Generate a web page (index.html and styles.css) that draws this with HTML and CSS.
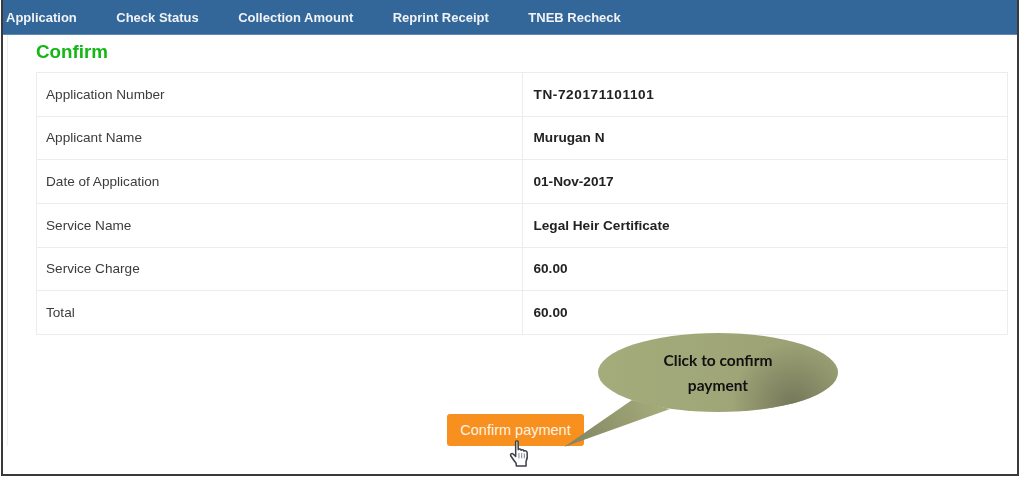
FILE: index.html
```html
<!DOCTYPE html>
<html lang="en">
<head>
    <meta charset="UTF-8">
    <meta name="viewport" content="width=device-width, initial-scale=1.0">
    <title>Confirm</title>
    <link rel="stylesheet" href="styles.css">
</head>
<body>
    <div class="frame">
        <div class="menu">
            <a href="#">Application</a>
            <a href="#">Check Status</a>
            <a href="#">Collection Amount</a>
            <a href="#">Reprint Receipt</a>
            <a href="#">TNEB Recheck</a>
        </div>
        <div class="content">
            <h1>Confirm</h1>
            <table class="details">
                <tr><td>Application Number</td><td class="value app-no">TN-720171101101</td></tr>
                <tr><td>Applicant Name</td><td class="value">Murugan N</td></tr>
                <tr><td>Date of Application</td><td class="value">01-Nov-2017</td></tr>
                <tr><td>Service Name</td><td class="value">Legal Heir Certificate</td></tr>
                <tr><td>Service Charge</td><td class="value">60.00</td></tr>
                <tr><td>Total</td><td class="value">60.00</td></tr>
            </table>
            <div class="actions">
                <button class="confirm-btn">Confirm payment</button>
                <!-- callout over the button -->
                <svg class="callout-shape" width="290" height="130" viewBox="0 0 290 130">
                    <defs>
                        <linearGradient id="olive" gradientUnits="userSpaceOnUse" x1="45" y1="40" x2="285" y2="40">
                            <stop offset="0" stop-color="#a5ac7b"/>
                            <stop offset="1" stop-color="#9aa074"/>
                        </linearGradient>
                        <linearGradient id="tail" gradientUnits="userSpaceOnUse" x1="100" y1="70" x2="11" y2="115">
                            <stop offset="0" stop-color="#a3a979"/>
                            <stop offset="1" stop-color="#7f8361"/>
                        </linearGradient>
                        <radialGradient id="shade" gradientUnits="userSpaceOnUse" cx="240" cy="72" r="62">
                            <stop offset="0" stop-color="#75785a"/>
                            <stop offset="1" stop-color="#75785a" stop-opacity="0"/>
                        </radialGradient>
                    </defs>
                    <path d="M11 115 L79 68 L117 77 Z" fill="url(#tail)"/>
                    <ellipse cx="165" cy="40.500" rx="120" ry="39.500" fill="url(#olive)"/>
                    <ellipse cx="165" cy="40.500" rx="120" ry="39.500" fill="url(#shade)"/>
                </svg>
                <div class="callout-text">Click to confirm<br>payment</div>
                <svg class="hand" width="22" height="27" viewBox="0 0 20 25">
                    <path d="M6 1.500 C6 .6 8.200 .6 8.200 1.500 L8.400 9 C9 8 10.800 8.200 11 9.400 C11.800 8.600 13.400 9 13.600 10.200 C14.600 9.600 16.400 10 16.600 11.600 C17 14.500 17 17 15.600 20 L15.600 24 L6.600 24 L6.400 21.600 C4.600 19.400 3 17 1.400 14.600 C.6 13.200 2.400 12 3.600 13 L6 15.200 Z" fill="#fff" stroke="#3a3f48" stroke-width="1.400" stroke-linejoin="round"/>
                    <path d="M9 12 V17 M11.600 12 V17 M14 12.500 V17" stroke="#6b7078" stroke-width="0.8" fill="none"/>
                </svg>
            </div>
        </div>
    </div>
</body>
</html>
```

FILE: styles.css
```css
body {
    margin: 0;
    padding: 0;
    background: #fff;
    font-family: "Liberation Sans", Arial, sans-serif;
    font-size: 12px;
    color: #333;
}
.frame {
    width: 1018px;
    height: 476px;
    margin-left: 1px;
    box-sizing: border-box;
    border: 2px solid #3a3a3a;
    border-top: none;
    overflow: hidden;
    filter: blur(0.4px); /* reference is a soft upscaled capture */
}
.menu {
    display: flex;
    gap: 39.5px;
    height: 35px;
    box-sizing: border-box;
    padding-left: 3px;
    align-items: center;
    background-color: #336699;
    border-bottom: 1px solid #5f88b4;
}
.menu a {
    color: #f0f3f7;
    text-decoration: none;
    font-weight: bold;
    font-size: 13px;
}
.content {
    margin-left: 4px;
    padding: 0 9px 0 28px;
    border-left: 1px solid #f0f0ea;
}
h1 {
    margin: 0;
    padding-top: 6px;
    height: 37px;
    box-sizing: border-box;
    font-size: 18.8px;
    line-height: 21px;
    color: #14b814;
}
.details {
    width: 972px;
    height: 263px;
    border-collapse: collapse;
    table-layout: fixed;
    font-size: 13.6px;
    color: #3c3c3c;
}
.details td {
    border: 1px solid #ececec;
    padding: 0 9px;
}
.details .value {
    padding-left: 11px;
    font-weight: bold;
    color: #222;
}
.details .app-no {
    letter-spacing: 0.6px;
}
.actions {
    position: relative;
    padding: 79px 0 0 411px;
}
.confirm-btn {
    display: block;
    width: 137px;
    height: 32px;
    padding: 0;
    border: none;
    border-radius: 3px;
    background-color: #f7901e;
    color: #fdf3e6;
    font-family: "Liberation Sans", Arial, sans-serif;
    font-size: 14.5px;
}
.callout-shape {
    position: absolute;
    left: 517px;
    top: -3px;
}
.callout-text {
    position: absolute;
    left: 592px;
    top: 13px;
    width: 180px;
    text-align: center;
    font-family: Lato, sans-serif;
    font-weight: bold;
    font-size: 15.5px;
    line-height: 25px;
    color: #111;
}
.hand {
    position: absolute;
    left: 473px;
    top: 105px;
}
```
